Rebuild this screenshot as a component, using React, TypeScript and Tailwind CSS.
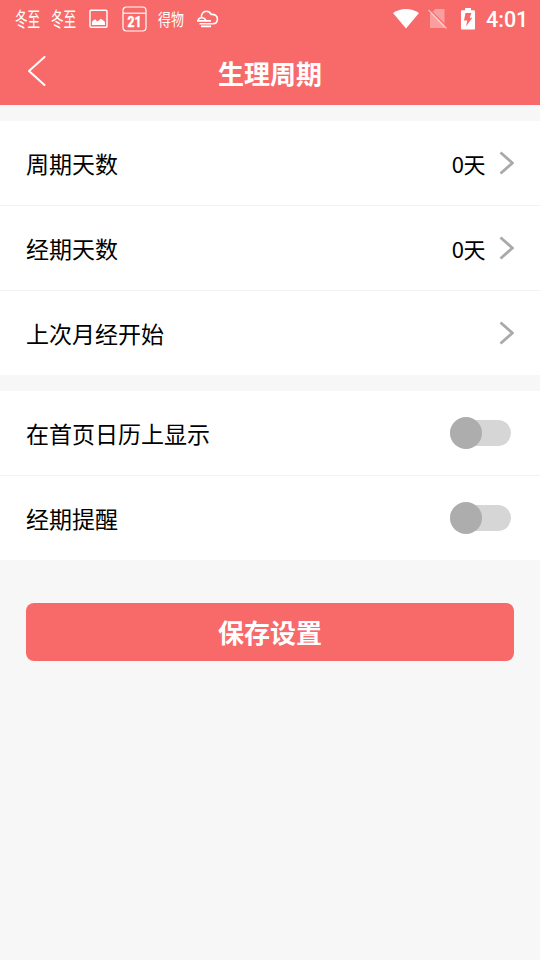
import { useState } from 'react';

interface LinkRow {
  label: string;
  value?: string;
}

const linkRows: LinkRow[] = [
  { label: '周期天数', value: '0天' },
  { label: '经期天数', value: '0天' },
  { label: '上次月经开始' },
];

const switchRows = ['在首页日历上显示', '经期提醒'];

const StatusBar = () => (
  <div className="flex h-[38px] items-center justify-between pl-[15px] pr-3">
    <div className="flex h-full items-center">
      {[0, 1].map((i) => (
        <span key={i} className="mr-[11px] block h-[38px] w-[25px] whitespace-nowrap text-[20px] leading-[37px]">
          <span className="block w-10 origin-left scale-x-[0.63]">冬至</span>
        </span>
      ))}
      {/* Picture */}
      <svg className="ml-[2px]" width="20" height="20" viewBox="0 0 20 20" fill="none">
        <rect x="1" y="1.2" width="17" height="17" rx="1" stroke="white" strokeWidth="1.4" />
        <path d="M3 16v-3.200l2-2 1.500-.2L8 12.500l2.200-1.300 1.600-1.500 2.200 1.600 2 1.700v3z" fill="white" />
      </svg>
      {/* Calendar */}
      <svg className="ml-[13px]" width="26" height="26" viewBox="0 0 26 26" fill="none">
        <rect x="1" y="1" width="23" height="24" rx="3.5" stroke="white" strokeWidth="1.2" />
        <path d="M1 7.2h23" stroke="white" strokeWidth="1.2" />
        <text
          x="12.6"
          y="21.3"
          textAnchor="middle"
          textLength="14"
          lengthAdjust="spacingAndGlyphs"
          fill="white"
          stroke="white"
          strokeWidth="0.4"
          fontSize="15"
          fontWeight="800"
          fontFamily="Roboto, sans-serif"
        >
          21
        </text>
      </svg>
      <span className="ml-[10px] block w-[26px] whitespace-nowrap text-[16px] leading-[36px]">
        <span className="block w-8 origin-left scale-x-[0.81] scale-y-[1.05]">得物</span>
      </span>
      {/* Weather */}
      <svg className="ml-3" width="24" height="20" viewBox="0 0 24 20" fill="none" stroke="white" strokeWidth="1.6">
        <path d="M2.200 11.300c.2-1.700 1.300-2.400 3.200-2.500C5 5 7.300 2.300 10.400 2.300c2.400 0 4 1.200 4.700 3.100 3.700-.4 6.300 1.700 6.300 4.700 0 2.800-1.800 4.700-4.700 4.700M5.400 8.800c2-.3 3.600.7 4.400 2.400" />
        <path d="M1 11.900h14M3.500 14.700h13.200M5 17.400h10" />
      </svg>
    </div>
    <div className="flex items-center">
      <svg width="26" height="20" viewBox="0 0 26 20" fill="white">
        <path d="M0 4C8-1.300 18-1.300 26 4L13 19.500z" />
      </svg>
      <svg className="ml-[9px]" width="20" height="22" viewBox="0 0 20 22">
        <path d="M7.500 1H16.500V20H2V6z" fill="white" fillOpacity="0.36" />
        <path d="M1.500 1.500l18 18" stroke="#f86a69" strokeWidth="1.500" />
        <path d="M.5 2l18 18.500" stroke="white" strokeOpacity="0.5" strokeWidth="1.500" />
      </svg>
      <svg className="-mt-px ml-[13px]" width="14" height="22" viewBox="0 0 14 22">
        <path d="M4 0h6v2.200h2.800q1.200 0 1.200 1.200v17q0 1.200-1.200 1.200H1.200Q0 21.600 0 20.400V3.400q0-1.200 1.200-1.200H4z" fill="white" />
        <path d="M4.500 5h6L8.700 9.800h2.600L5 18.500l1.300-6H3z" fill="#f86a69" />
      </svg>
      <span className="ml-[11px] w-[42px] pt-px font-[Roboto,sans-serif] text-[21.5px] font-medium leading-[38px]">4:01</span>
    </div>
  </div>
);

const Chevron = () => (
  <svg
    className="-mt-px ml-[14px]"
    width="16"
    height="24"
    viewBox="0 0 16 24"
    fill="none"
    stroke="#a9a9a9"
    strokeWidth="2.8"
  >
    <path d="M1.500 1.500L13.500 12 1.500 22.500" strokeLinejoin="round" />
  </svg>
);

const Toggle = ({ label }: { label: string }) => {
  const [on, setOn] = useState(false);

  return (
    <button
      role="switch"
      aria-checked={on}
      aria-label={label}
      onClick={() => setOn(!on)}
      className={`mr-[3px] flex h-8 w-[61px] items-center ${on ? 'justify-end' : 'justify-start'}`}
    >
      <span className="h-[26px] w-[61px] shrink-0 rounded-full bg-[#d6d6d6]" />
      <span className={`-ml-[61px] size-8 shrink-0 rounded-full ${on ? 'bg-[#f86a69]' : 'bg-[#adadad]'}`} />
    </button>
  );
};

const App = () => {
  return (
    <div className="min-h-[960px] bg-[#f7f7f7] font-['Noto_Sans_CJK_SC',sans-serif] text-black">
      <header className="h-[105px] bg-[#f86a69] text-white">
        <StatusBar />
        <div className="grid h-[67px] grid-cols-[1fr_auto_1fr] items-center">
          <button aria-label="back" className="-mt-px ml-[27px] w-5">
            <svg width="20" height="32" viewBox="0 0 20 32" fill="none" stroke="white" strokeWidth="2">
              <path d="M17.500 2L2 16l15.500 14" strokeLinecap="round" strokeLinejoin="round" />
            </svg>
          </button>
          <h1 className="pt-[3px] text-[26px] font-bold leading-[64px]">生理周期</h1>
        </div>
      </header>

      <section className="mt-4 divide-y divide-[#f2f2f2] bg-white">
        {linkRows.map((row) => (
          <div key={row.label} className="flex h-[85px] items-center pl-[26px] pr-[25px] text-[23px] last:h-[84px]">
            <span className="flex-1">{row.label}</span>
            {row.value && <span className="text-[22px] tracking-[-0.5px]">{row.value}</span>}
            <Chevron />
          </div>
        ))}
      </section>

      <section className="mt-4 divide-y divide-[#f2f2f2] bg-white">
        {switchRows.map((label) => (
          <div key={label} className="flex h-[85px] items-center justify-between px-[26px] text-[23px] last:h-[84px]">
            <span>{label}</span>
            <Toggle label={label} />
          </div>
        ))}
      </section>

      <div className="px-[26px] pt-[43px]">
        <button className="h-[58px] w-full rounded-lg bg-[#f86a69] pb-0.5 text-[26px] font-bold text-white">保存设置</button>
      </div>
    </div>
  );
};

export default App;
